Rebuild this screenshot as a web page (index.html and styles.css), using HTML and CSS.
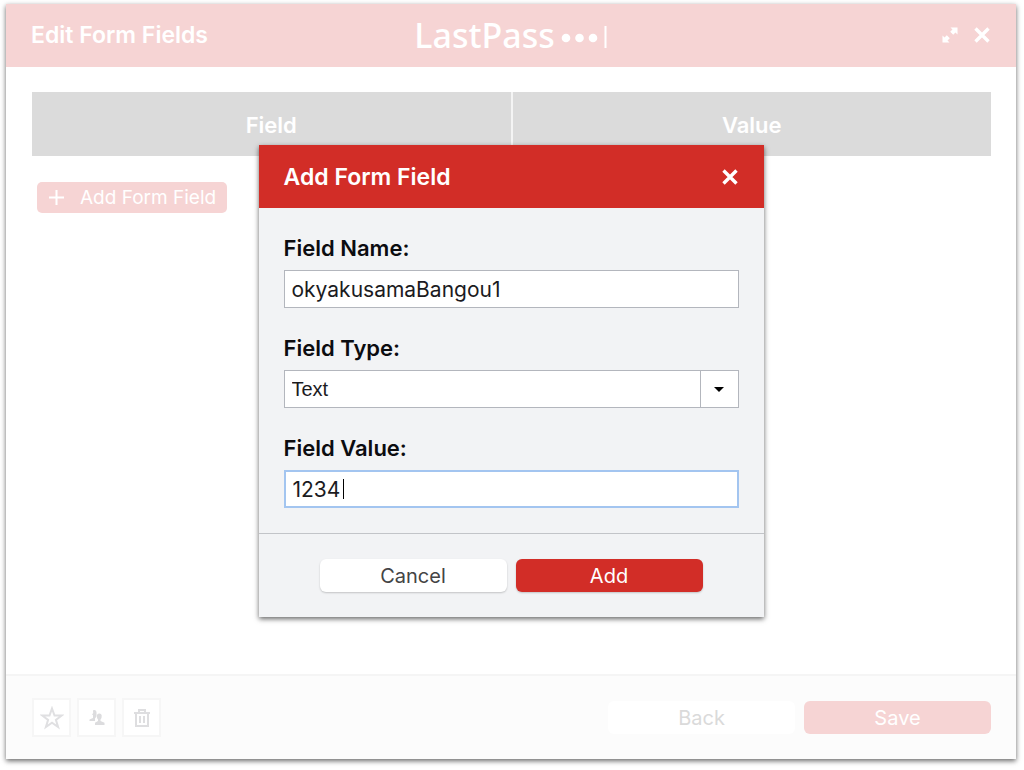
FILE: index.html
```html
<!DOCTYPE html>
<html lang="en">
<head>
    <meta charset="UTF-8">
    <meta name="viewport" content="width=device-width, initial-scale=1.0">
    <title>Edit Form Fields</title>
    <link rel="stylesheet" href="styles.css">
</head>
<body>
    <main class="window">
        <header class="window-header">
            <h1 class="title">Edit Form Fields</h1>
            <div class="logo">
                <span class="logo-text">LastPass</span>
                <svg width="46" height="28" viewBox="0 0 46 28" fill="#fff" aria-hidden="true">
                    <circle cx="5" cy="17" r="4.3"/>
                    <circle cx="18.500" cy="17" r="4.3"/>
                    <circle cx="32" cy="17" r="4.3"/>
                    <rect x="43.500" y="5" width="2" height="22"/>
                </svg>
            </div>
            <div class="window-actions">
                <button type="button" class="icon-plain" aria-label="Expand">
                    <svg width="16" height="16" viewBox="0 0 16 16" fill="#fff">
                        <path d="M8.500 0.500h7V7.500l-2-2-2.300 2.300-3-3L10.500 2.500zM7.500 15.500h-7V8.500l2 2 2.300-2.300 3 3L5.500 13.500z"/>
                    </svg>
                </button>
                <button type="button" class="icon-plain" aria-label="Close">
                    <svg width="16" height="16" viewBox="0 0 16 16" stroke="#fff" stroke-width="3.4">
                        <path d="M1.500 1.500l13 13M14.500 1.500l-13 13"/>
                    </svg>
                </button>
            </div>
        </header>

        <section class="window-body">
            <table class="fields">
                <thead>
                    <tr>
                        <th>Field</th>
                        <th>Value</th>
                    </tr>
                </thead>
            </table>
            <button type="button" class="add-field">
                <svg width="15" height="15" viewBox="0 0 15 15" stroke="#fff" stroke-width="2">
                    <path d="M7.500 0v15M0 7.500h15"/>
                </svg>
                Add Form Field
            </button>
        </section>

        <footer class="window-footer">
            <div class="tools">
                <button type="button" class="tool" aria-label="Favorite">
                    <svg width="24" height="24" viewBox="0 0 24 24" fill="none" stroke="#e0e0e2" stroke-width="2">
                        <path d="M12 2.500l2.500 7h7.300l-5.900 4.400 2.200 7.100-6.100-4.300L5.900 21l2.200-7.100-5.900-4.400h7.300z"/>
                    </svg>
                </button>
                <button type="button" class="tool" aria-label="Share">
                    <svg width="18" height="18" viewBox="0 0 18 18" fill="#dcdcde">
                        <path d="M5 1.500c2-1 3.500 0 3.500 2v4L7 9.500V12H1.500v-1.500L5 9V6L4 5.500 5.200 4z"/>
                        <path d="M9 6c1-2.200 4.500-2 4.700.5l-.2 2.500-1 1.500v1.500l4 1.800V16H7v-2.200l3-1.800v-1.500L9 9z"/>
                    </svg>
                </button>
                <button type="button" class="tool" aria-label="Delete">
                    <svg width="18" height="20" viewBox="0 0 18 20" fill="none" stroke="#dedee0" stroke-width="2">
                        <path d="M1 5h16M6 5V2h6v3M3 5v13h12V5M7 8v7M11 8v7"/>
                    </svg>
                </button>
            </div>
            <button type="button" class="btn btn-back">Back</button>
            <button type="button" class="btn btn-save">Save</button>
        </footer>

        <div class="overlay">
            <form class="dialog" role="dialog" aria-labelledby="dialogTitle">
                <header class="dialog-header">
                    <h2 class="title" id="dialogTitle">Add Form Field</h2>
                    <button type="button" class="icon-plain" aria-label="Close">
                        <svg width="16" height="16" viewBox="0 0 16 16" stroke="#fff" stroke-width="3.4">
                            <path d="M1.500 1.500l13 13M14.500 1.500l-13 13"/>
                        </svg>
                    </button>
                </header>
                <div class="dialog-body">
                    <div class="field">
                        <label for="fieldName">Field Name:</label>
                        <input type="text" class="control" id="fieldName" value="okyakusamaBangou1">
                    </div>
                    <div class="field">
                        <label for="fieldType">Field Type:</label>
                        <div class="control-wrap">
                            <select class="control control-select" id="fieldType">
                                <option>Text</option>
                                <option>Password</option>
                            </select>
                            <span class="arrow"></span>
                        </div>
                    </div>
                    <div class="field">
                        <label for="fieldValue">Field Value:</label>
                        <div class="control-wrap">
                            <input type="text" class="control control-active" id="fieldValue" value="1234">
                            <span class="caret"></span>
                        </div>
                    </div>
                </div>
                <footer class="dialog-footer">
                    <button type="button" class="btn btn-cancel">Cancel</button>
                    <button type="submit" class="btn btn-add">Add</button>
                </footer>
            </form>
        </div>
    </main>
</body>
</html>
```

FILE: styles.css
```css
* {
    box-sizing: border-box;
}
body {
    margin: 0;
    min-height: 100vh;
    padding: 4px 8px 11px 6px;
    display: flex;
    background: #fff;
    font-family: Inter, "Liberation Sans", sans-serif;
    font-size: 20px;
    color: #0c0c10;
}
button, input, select {
    font: inherit;
}
button {
    border: 0;
    padding: 0;
}
svg {
    display: block;
}
.window {
    position: relative;
    flex: 1;
    display: flex;
    flex-direction: column;
    background: #fff;
    box-shadow: 0 2px 5px rgba(0,0,0,0.6);
}
.window-header {
    display: grid;
    grid-template-columns: 1fr auto 1fr;
    align-items: center;
    height: 63px;
    padding: 0 26px 1px 25px;
    background: #f6d4d4;
}
.title {
    margin: 0;
    font-size: 23px;
    font-weight: 600;
    color: #fff;
}
.logo {
    display: flex;
    align-items: center;
    gap: 6px;
}
.logo-text {
    font-family: "Noto Sans", sans-serif;
    font-size: 34px;
    font-weight: 500;
    line-height: 40px;
    color: #fff;
}
.window-actions {
    display: flex;
    justify-content: flex-end;
    gap: 16px;
}
.icon-plain {
    background: none;
}
.window-body {
    flex: 1;
    padding: 25px 25px 25px 26px;
}
.fields {
    width: 100%;
    table-layout: fixed;
    border-collapse: collapse;
    margin-bottom: 26px;
}
.fields th {
    height: 64px;
    padding: 2px 0 0;
    background: #dbdbdb;
    font-size: 22px;
    font-weight: 600;
    color: #fff;
}
.fields th + th {
    border-left: 2px solid #f4f4f4;
}
.add-field {
    display: flex;
    align-items: center;
    gap: 16px;
    height: 31px;
    margin-left: 5px;
    padding: 0 11px 0 12px;
    border-radius: 5px;
    background: #f6d4d4;
    font-size: 19px;
    color: #fff;
}
.window-footer {
    display: flex;
    align-items: center;
    gap: 9px;
    height: 85px;
    padding: 0 25px 0 26px;
    border-top: 2px solid #f5f5f5;
    background: #fcfcfc;
}
.tools {
    display: flex;
    gap: 6px;
    margin-right: auto;
}
.tool {
    display: grid;
    place-items: center;
    width: 39px;
    height: 39px;
    border: 2px solid #f6f6f6;
    background: #fff;
}
.btn {
    width: 187px;
    height: 33px;
    border-radius: 6px;
}
.btn-back {
    background: #fff;
    color: #dadada;
}
.btn-save {
    background: #f6d4d4;
    color: #fff;
}

/* modal */
.overlay {
    position: absolute;
    inset: 0;
    display: grid;
    place-items: center;
    padding-bottom: 1px;
}
.dialog {
    width: 50%;
    background: #f2f3f5;
    box-shadow: 0 2px 5px rgba(0,0,0,0.6);
}
.dialog-header {
    display: flex;
    align-items: center;
    justify-content: space-between;
    height: 63px;
    padding: 0 26px 0 25px;
    background: #d22d27;
}
.dialog-body {
    display: flex;
    flex-direction: column;
    gap: 28px;
    padding: 28px 25px 25px;
}
.field {
    display: flex;
    flex-direction: column;
    gap: 10px;
}
.field label {
    font-size: 22px;
    font-weight: 600;
    line-height: 24px;
}
.control-wrap {
    position: relative;
}
.control {
    display: block;
    width: 100%;
    height: 38px;
    padding: 0 7px;
    border: 1px solid #b3b6bd;
    border-radius: 0;
    outline: 0;
    background: #fff;
    font-size: 21px;
    color: #1b1b1e;
}
.control-select {
    appearance: none;
    font-family: "Liberation Sans", sans-serif;
    font-size: 20px;
}
.control-active {
    border: 2px solid #a3c5f0;
}
.arrow {
    position: absolute;
    top: 0;
    right: 0;
    display: grid;
    place-items: center;
    width: 39px;
    height: 38px;
    border: 1px solid #b3b6bd;
    pointer-events: none;
}
.arrow::after {
    content: "";
    border: 5px solid transparent;
    border-top-color: #000;
    border-bottom: 0;
}
.caret {
    position: absolute;
    top: 9px;
    left: 59px;
    width: 1px;
    height: 20px;
    background: #000;
}
.dialog-footer {
    display: flex;
    align-items: center;
    justify-content: center;
    gap: 9px;
    height: 84px;
    border-top: 1px solid #c2c4c8;
}
.btn-cancel {
    background: #fff;
    color: #444;
    box-shadow: 0 1px 2px rgba(0,0,0,0.2);
}
.btn-add {
    background: #d22d27;
    color: #fff;
    box-shadow: 0 1px 2px rgba(0,0,0,0.2);
}
```
